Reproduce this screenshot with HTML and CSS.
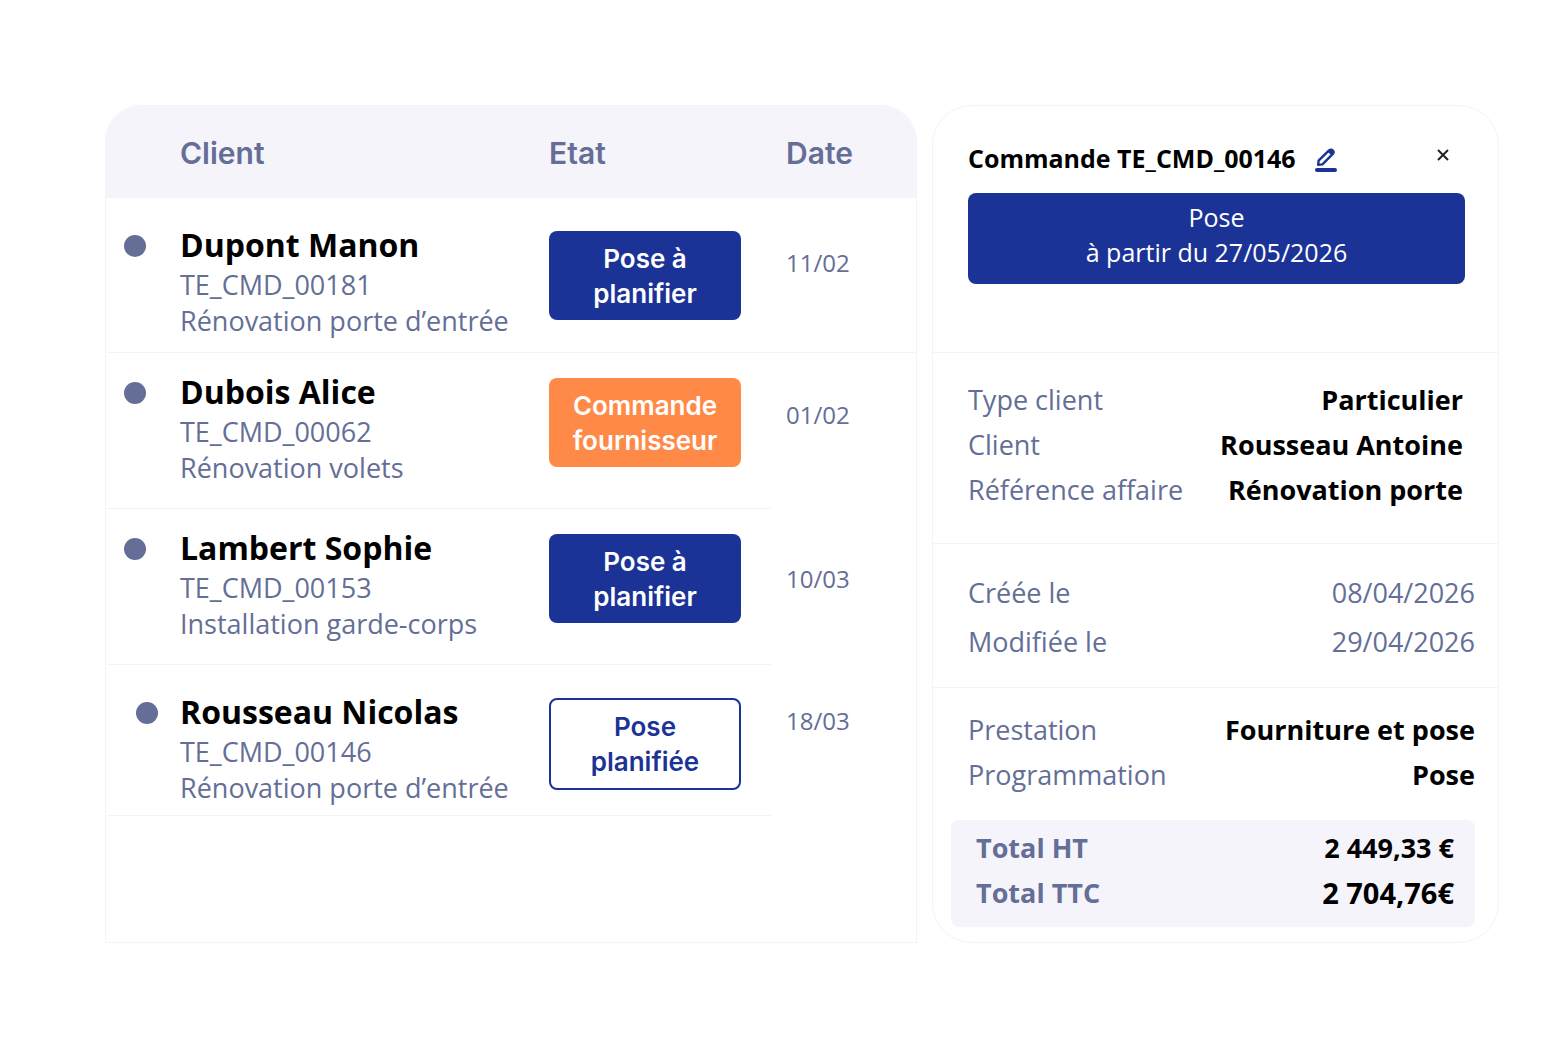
FILE: index.html
```html
<!DOCTYPE html>
<html lang="fr">
<head>
<meta charset="utf-8">
<meta name="viewport" content="width=device-width, initial-scale=1">
<title>Commandes</title>
<link rel="stylesheet" href="styles.css">
</head>
<body>
<main class="board">
  <section class="orders" aria-label="Liste des commandes">
    <table class="orders-table">
      <colgroup>
        <col class="col-dot">
        <col>
        <col class="col-state">
        <col class="col-date">
      </colgroup>
      <thead>
        <tr>
          <th></th>
          <th scope="col">Client</th>
          <th scope="col">Etat</th>
          <th scope="col" class="date">Date</th>
        </tr>
      </thead>
      <tbody>
        <tr class="order order-roomy order-first">
          <td class="marker"><span class="dot"></span></td>
          <td>
            <strong class="name">Dupont Manon</strong>
            <span class="meta">TE_CMD_00181</span>
            <span class="meta">Rénovation porte d’entrée</span>
          </td>
          <td><span class="badge">Pose à<br>planifier</span></td>
          <td class="date">11/02</td>
        </tr>
        <tr class="order">
          <td class="marker"><span class="dot"></span></td>
          <td>
            <strong class="name">Dubois Alice</strong>
            <span class="meta">TE_CMD_00062</span>
            <span class="meta">Rénovation volets</span>
          </td>
          <td><span class="badge badge-supplier">Commande<br>fournisseur</span></td>
          <td class="date">01/02</td>
        </tr>
        <tr class="order order-late">
          <td class="marker"><span class="dot"></span></td>
          <td>
            <strong class="name">Lambert Sophie</strong>
            <span class="meta">TE_CMD_00153</span>
            <span class="meta">Installation garde-corps</span>
          </td>
          <td><span class="badge">Pose à<br>planifier</span></td>
          <td class="date">10/03</td>
        </tr>
        <tr class="order order-roomy order-selected">
          <td class="marker"><span class="dot"></span></td>
          <td>
            <strong class="name">Rousseau Nicolas</strong>
            <span class="meta">TE_CMD_00146</span>
            <span class="meta">Rénovation porte d’entrée</span>
          </td>
          <td><span class="badge badge-outline">Pose<br>planifiée</span></td>
          <td class="date">18/03</td>
        </tr>
      </tbody>
    </table>
  </section>

  <aside class="details" aria-label="Détail de la commande">
    <header class="details-head">
      <div class="title-row">
        <h1 class="title">Commande TE_CMD_00146</h1>
        <button class="icon-button edit" type="button" aria-label="Modifier">
          <svg width="22" height="24" viewBox="0 0 22 24" fill="none">
            <path d="M3.2 16.8 L3.6 12.6 L14 2.4 Q16 0.8 17.8 2.6 Q19.4 4.4 17.6 6.2 L7.4 16.4 Z" stroke="#1b3397" stroke-width="2.4" stroke-linejoin="round"/>
            <path d="M12.6 3.6 L15 1.2 Q16.4 0.2 18.2 1.8 Q20 3.8 18.8 5.4 L16.4 7.6 Z" fill="#1b3397"/>
            <path d="M2 22 H20" stroke="#1b3397" stroke-width="4" stroke-linecap="round"/>
          </svg>
        </button>
        <button class="icon-button close" type="button" aria-label="Fermer">
          <svg width="12" height="12" viewBox="0 0 12 12">
            <path d="M1 1 L11 11 M11 1 L1 11" stroke="#222" stroke-width="2"/>
          </svg>
        </button>
      </div>
      <p class="banner">Pose<br>à partir du 27/05/2026</p>
    </header>

    <dl class="group group-client">
      <div class="pair"><dt>Type client</dt><dd>Particulier</dd></div>
      <div class="pair"><dt>Client</dt><dd>Rousseau Antoine</dd></div>
      <div class="pair"><dt>Référence affaire</dt><dd>Rénovation porte</dd></div>
    </dl>

    <dl class="group group-dates">
      <div class="pair"><dt>Créée le</dt><dd>08/04/2026</dd></div>
      <div class="pair"><dt>Modifiée le</dt><dd>29/04/2026</dd></div>
    </dl>

    <dl class="group group-service">
      <div class="pair"><dt>Prestation</dt><dd>Fourniture et pose</dd></div>
      <div class="pair"><dt>Programmation</dt><dd>Pose</dd></div>
    </dl>

    <dl class="totals">
      <div class="pair"><dt>Total HT</dt><dd>2 449,33 €</dd></div>
      <div class="pair"><dt>Total TTC</dt><dd class="grand">2 704,76€</dd></div>
    </dl>
  </aside>
</main>
</body>
</html>
```
FILE: styles.css
```css
:root {
  --navy: #1b3397;
  --orange: #ff8a47;
  --slate: #646e97;
  --tint: #f5f4fa;
  --line: #f4f4f7;
  --body-font: "Open Sans", "Noto Sans", sans-serif;
  --label-font: Inter, "Open Sans", sans-serif;
}

* { box-sizing: border-box; }

body {
  margin: 0;
  background: #fff;
  color: #000;
  font-family: var(--body-font);
  font-size: 27px;
}

.board {
  display: grid;
  grid-template-columns: 812fr 567fr;
  gap: 15px;
  padding: 105px 69px 105px 105px;
}

/* Orders list */

.orders {
  overflow: hidden;
  border: 1px solid var(--line);
  border-radius: 36px 36px 0 0;
}

.orders-table {
  width: 100%;
  table-layout: fixed;
  border-collapse: collapse;
}

.col-dot { width: 74px; }
.col-state { width: 223px; }
.col-date { width: 144px; }

th {
  height: 92px;
  padding: 2px 0 0;
  background: var(--tint);
  color: var(--slate);
  font: 600 30px/36px var(--label-font);
  text-align: left;
}

th.date { padding-left: 14px; }

.order { --top: 25px; --date-top: 45px; }
.order-roomy { --top: 33px; }
.order-first { --date-top: 48px; }
.order-late { --date-top: 53px; }
.order-selected { --date-top: 39px; }

.order td {
  padding: var(--top) 0 22px;
  border-bottom: 1px solid var(--line);
  vertical-align: top;
}

.order-roomy td { padding-bottom: 13px; }
.order-selected td { padding-bottom: 9px; }

.order td.date {
  padding: var(--date-top) 0 0 14px;
  color: var(--slate);
  font-size: 24px;
  line-height: 34px;
}

.order:not(.order-first) td.date { border-bottom: 0; }

.order td.marker { padding-left: 18px; }
.order-selected td.marker { padding-left: 30px; }

.dot {
  display: block;
  width: 22px;
  height: 22px;
  margin-top: 4px;
  border-radius: 50%;
  background: var(--slate);
}

.name {
  display: block;
  margin-bottom: 8px;
  font-size: 32px;
  line-height: 28px;
}

.meta {
  display: block;
  color: var(--slate);
  line-height: 36px;
}

.badge {
  display: block;
  width: 192px;
  padding: 10px 0 9px;
  border-radius: 8px;
  background: var(--navy);
  color: #fff;
  font: 600 26px/35px var(--label-font);
  text-align: center;
}

.badge-supplier { background: var(--orange); }

.badge-outline {
  padding: 9px 0;
  border: 2px solid var(--navy);
  background: #fff;
  color: var(--navy);
}

/* Order details */

.details {
  border: 1px solid var(--line);
  border-radius: 40px;
}

.details-head {
  padding: 34px 33px 68px 35px;
  border-bottom: 1px solid var(--line);
}

.title-row {
  display: flex;
  align-items: center;
  gap: 19px;
}

.title {
  margin: 0;
  font-size: 25px;
  line-height: 36px;
}

.icon-button {
  display: flex;
  padding: 0;
  border: 0;
  background: none;
  cursor: pointer;
}

.edit { margin-top: 4px; }
.close { margin: 0 16px 6px auto; }

.banner {
  margin: 17px 0 0;
  padding: 7px 0 14px;
  border-radius: 8px;
  background: var(--navy);
  color: #fff;
  font-size: 25px;
  line-height: 35px;
  text-align: center;
}

.group {
  margin: 0;
  padding: 24px 23px 31px 35px;
  border-bottom: 1px solid var(--line);
}

.pair {
  display: flex;
  justify-content: space-between;
  line-height: 45px;
}

dt { color: var(--slate); }

dd {
  margin: 0;
  font-weight: 700;
}

.group-client { padding-right: 35px; }

.group-dates { padding-bottom: 21px; }
.group-dates .pair { line-height: 49px; }
.group-dates dd { color: var(--slate); font-weight: 400; }

.group-service {
  padding-top: 19px;
  padding-bottom: 23px;
  border-bottom: 0;
}

.totals {
  margin: 0 23px 15px 18px;
  padding: 5px 21px 12px 25px;
  border-radius: 8px;
  background: var(--tint);
}

.totals dt { font-weight: 700; }
.totals .grand { font-size: 29px; }
```
